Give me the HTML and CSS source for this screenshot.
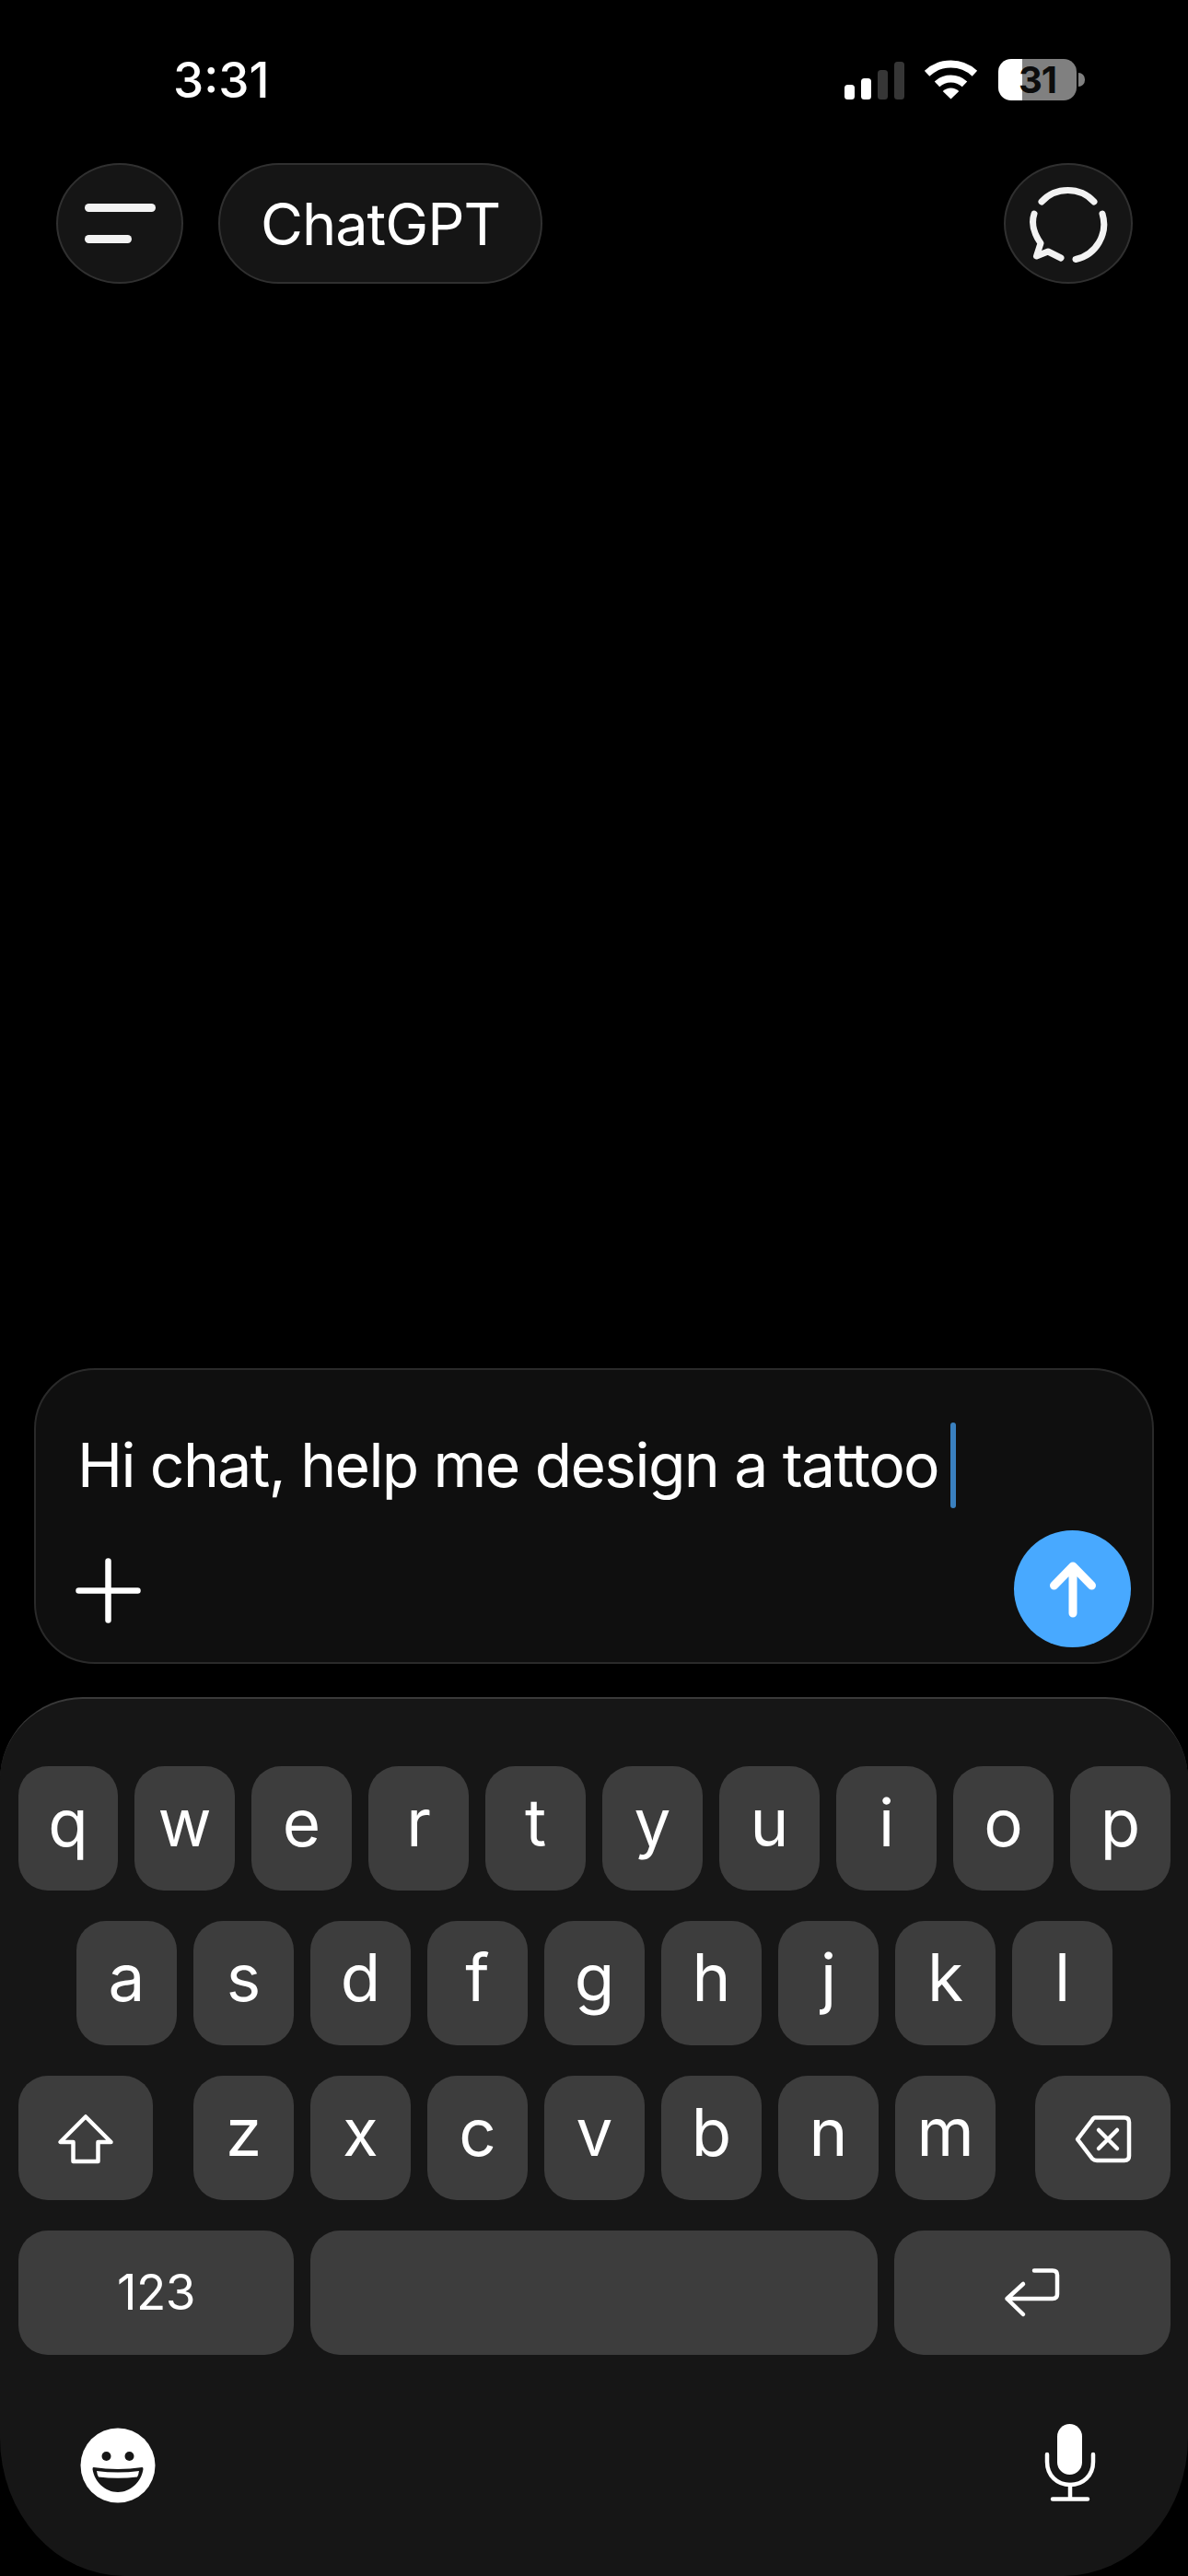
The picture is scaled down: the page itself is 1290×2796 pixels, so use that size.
FILE: index.html
```html
<!DOCTYPE html>
<html lang="en">
<head>
<meta charset="utf-8">
<title>ChatGPT</title>
<link rel="stylesheet" href="styles.css">
</head>
<body>
<div class="phone">
  <div class="status">
    <span class="time">3:31</span>
    <div class="status-icons">
      <svg class="signal" width="65" height="42" viewBox="916 65 65 42">
        <rect x="916" y="91" width="11" height="16" rx="3.5" fill="#fff"/>
        <rect x="934" y="84" width="11" height="23" rx="3.5" fill="#fff"/>
        <rect x="952" y="75" width="11" height="32" rx="3.5" fill="#363636"/>
        <rect x="970" y="66" width="11" height="41" rx="3.5" fill="#363636"/>
      </svg>
      <svg class="wifi" width="58" height="43" viewBox="1004 64.500 58 43">
        <path d="M1006.600 79.200A38 38 0 0 1 1058.400 79.200M1017.500 90.900A22 22 0 0 1 1047.500 90.900" fill="none" stroke="#fff" stroke-width="8"/>
        <path d="M1032.500 107L1023.700 98.500A12.500 12.500 0 0 1 1041.300 98.500Z" fill="#fff"/>
      </svg>
      <div class="battery"><span class="battery-level">31</span><span class="battery-nub"></span></div>
    </div>
  </div>

  <header class="topbar">
    <div class="topbar-left">
      <div class="round-btn menu-btn">
        <svg width="77" height="43" viewBox="0 0 77 43">
          <rect x="0" y="0" width="77" height="9" rx="4.500" fill="#f2f2f2"/>
          <rect x="0" y="34" width="51" height="9" rx="4.500" fill="#f2f2f2"/>
        </svg>
      </div>
      <div class="title-pill">ChatGPT</div>
    </div>
    <div class="round-btn chat-btn">
      <svg width="90" height="90" viewBox="1115 198 90 90" fill="none" stroke="#f2f2f2" stroke-width="7" stroke-linecap="round" stroke-linejoin="round">
        <path d="M1131 219A39 39 0 0 1 1188 219"/>
        <path d="M1197 232A39 39 0 0 1 1168 281.500"/>
        <path d="M1123 232C1119 244 1123 254 1130 264L1125.500 278L1138 273L1152 280"/>
      </svg>
    </div>
  </header>

  <div class="spacer"></div>

  <section class="composer">
    <div class="input-line">
      <span class="input-text">Hi chat, help me design a tattoo</span>
      <span class="caret"></span>
    </div>
    <div class="composer-actions">
      <svg class="plus" width="71" height="71" viewBox="0 0 71 71" stroke="#fff" stroke-width="6.500" stroke-linecap="round">
        <path d="M3.500 35.500H67.500M35.500 3.500V67.500"/>
      </svg>
      <div class="send">
        <svg width="60" height="70" viewBox="1134 1689 60 70" fill="none" stroke="#fff" stroke-width="9" stroke-linecap="round" stroke-linejoin="round">
          <path d="M1164 1750V1699M1143.500 1720L1164 1699L1184.500 1720"/>
        </svg>
      </div>
    </div>
  </section>

  <section class="keyboard">
    <div class="key-row">
      <div class="key key-first">q</div><div class="key">w</div><div class="key">e</div><div class="key">r</div><div class="key">t</div><div class="key">y</div><div class="key">u</div><div class="key">i</div><div class="key">o</div><div class="key">p</div>
    </div>
    <div class="key-row row-center">
      <div class="key">a</div><div class="key">s</div><div class="key">d</div><div class="key">f</div><div class="key">g</div><div class="key">h</div><div class="key">j</div><div class="key">k</div><div class="key">l</div>
    </div>
    <div class="key-row row-plain">
      <div class="key key-mod">
        <svg width="66" height="60" viewBox="60 2291 66 60" fill="none" stroke="#fff" stroke-width="4.500" stroke-linejoin="round">
          <path d="M93 2297.500L65.500 2325H79.500V2346H106.500V2325H120.500Z"/>
        </svg>
      </div>
      <div class="key-group">
        <div class="key">z</div><div class="key">x</div><div class="key">c</div><div class="key">v</div><div class="key">b</div><div class="key">n</div><div class="key">m</div>
      </div>
      <div class="key key-mod key-del">
        <svg width="74" height="60" viewBox="1160 2291 74 60" fill="none" stroke="#fff" stroke-width="4.500" stroke-linecap="round" stroke-linejoin="round">
          <path d="M1188 2298.500H1220Q1225 2298.500 1225 2303.500V2340Q1225 2345 1220 2345H1190Q1187 2345 1185 2343L1169 2322L1185 2301Q1186.500 2298.500 1188 2298.500Z"/>
          <path d="M1192 2312L1212 2332M1212 2312L1192 2332"/>
        </svg>
      </div>
    </div>
    <div class="key-row">
      <div class="key key-num">123</div>
      <div class="key key-space"></div>
      <div class="key key-return">
        <svg width="70" height="60" viewBox="1087 2458 70 60" fill="none" stroke="#fff" stroke-width="4.500" stroke-linecap="round" stroke-linejoin="round">
          <path d="M1124 2463.500H1144Q1149 2463.500 1149 2468.500V2489Q1149 2494 1144 2494H1094.500M1112 2478L1094.500 2494L1112 2511"/>
        </svg>
      </div>
    </div>
    <div class="key-footer">
      <svg width="90" height="90" viewBox="82.500 2630 90 90">
        <circle cx="127.500" cy="2676" r="40.500" fill="#fff"/>
        <circle cx="115" cy="2666" r="5" fill="#161616"/>
        <circle cx="140" cy="2666" r="5" fill="#161616"/>
        <path d="M101 2678Q127.500 2682 154 2678Q155 2678 155 2680C153 2694 141 2705 127.500 2705C114 2705 102 2694 100 2680Q100 2678 101 2678Z" fill="#161616"/>
        <path d="M104.500 2682Q127.500 2685 150.500 2682Q150 2686 148.500 2688.500Q127.500 2691 106.500 2688.500Q105 2686 104.500 2682Z" fill="#fff"/>
      </svg>
      <svg width="60" height="90" viewBox="1132 2630 60 90" fill="none" stroke="#fff" stroke-width="4.500" stroke-linecap="round">
        <rect x="1148" y="2631" width="27" height="55" rx="13.500" fill="#fff" stroke="none"/>
        <path d="M1137 2664V2672C1137 2687 1148 2697 1162 2697C1176 2697 1187 2687 1187 2672V2664"/>
        <path d="M1162 2697V2712.500M1143 2712.500H1181"/>
      </svg>
    </div>
  </section>
</div>
</body>
</html>
```
FILE: styles.css
```css
* {
  box-sizing: border-box;
}

html,
body {
  margin: 0;
  padding: 0;
  background: #000;
}

.phone {
  width: 1290px;
  height: 2796px;
  display: flex;
  flex-direction: column;
  overflow: hidden;
  background: #000;
  color: #fff;
  font-family: Inter, "Liberation Sans", sans-serif;
}

/* status bar */
.status {
  height: 177px;
  display: flex;
  justify-content: space-between;
  align-items: flex-start;
  padding: 56px 121px 0 188px;
}

.time {
  font-size: 53px;
  line-height: 63px;
  font-weight: 500;
}

.status-icons {
  display: flex;
  align-items: flex-start;
  gap: 22px;
  padding-top: 8px;
}

.signal {
  margin-top: 2px;
}

.wifi {
  margin-top: 0.5px;
}

.battery {
  position: relative;
  width: 85px;
  height: 45px;
  border-radius: 14px;
  background: linear-gradient(90deg, #fff 0 26px, #808080 26px);
  color: #0c0c0c;
  font-size: 40px;
  font-weight: 700;
  line-height: 45px;
  letter-spacing: -1px;
  text-align: center;
}

.battery-level {
  display: block;
}

.battery-nub {
  position: absolute;
  left: 87px;
  top: 15px;
  width: 7px;
  height: 15px;
  border-radius: 0 8px 8px 0;
  background: #808080;
}

/* top bar */
.topbar {
  height: 131px;
  display: flex;
  justify-content: space-between;
  padding: 0 60px 0 61px;
}

.topbar-left {
  display: flex;
  gap: 38px;
}

.round-btn {
  height: 131px;
  display: flex;
  align-items: center;
  justify-content: center;
  border: 2px solid #303030;
  border-radius: 50%;
  background: #151515;
}

.menu-btn {
  width: 138px;
}

.chat-btn {
  width: 140px;
}

.title-pill {
  width: 352px;
  height: 131px;
  display: flex;
  align-items: center;
  justify-content: center;
  border: 2px solid #303030;
  border-radius: 66px;
  background: #151515;
  font-size: 63px;
  font-weight: 400;
  letter-spacing: -1px;
}

.spacer {
  flex: 1;
}

/* composer */
.composer {
  height: 321px;
  margin: 0 37px 36px;
  padding: 57px 23px 16px 43px;
  display: flex;
  flex-direction: column;
  border: 2px solid #2a2a2a;
  border-radius: 66px;
  background: #0f0f0f;
}

.input-line {
  height: 93px;
  display: flex;
  align-items: center;
  padding-left: 2px;
  gap: 13px;
}

.input-text {
  font-size: 66px;
  line-height: 93px;
  letter-spacing: -1.6px;
}

.caret {
  width: 6px;
  height: 93px;
  border-radius: 3px;
  background: #3a80bf;
}

.composer-actions {
  margin-top: 24px;
  display: flex;
  justify-content: space-between;
  align-items: center;
}

.plus {
  margin-top: 3px;
}

.send {
  width: 127px;
  height: 127px;
  display: flex;
  align-items: center;
  justify-content: center;
  border-radius: 50%;
  background: #48a9ff;
}

/* keyboard */
.keyboard {
  height: 954px;
  padding: 73px 19px 0 20px;
  display: flex;
  flex-direction: column;
  gap: 33px;
  border-top: 2px solid #3a3a3a;
  border-radius: 90px 90px 135px 135px / 90px 90px 150px 150px;
  background: #161616;
}

.key-row,
.key-group {
  display: flex;
  gap: 18px;
}

.row-center {
  justify-content: center;
}

.row-plain {
  gap: 0;
}

.key-group {
  margin: 0 43px 0 44px;
}

.key {
  width: 109px;
  height: 135px;
  display: flex;
  align-items: center;
  justify-content: center;
  padding-bottom: 13px;
  border-radius: 32px;
  background: #3d3d3d;
  font-size: 71px;
  line-height: 1;
  font-weight: 400;
}

.key-first {
  width: 108px;
}

.key-mod {
  width: 146px;
  padding-bottom: 0;
}

.key-del {
  width: 147px;
}

.key-num {
  width: 299px;
  padding-bottom: 0;
  font-size: 53px;
  font-weight: 400;
  letter-spacing: -0.5px;
}

.key-space {
  flex: 1;
}

.key-return {
  width: 300px;
  padding-bottom: 0;
}

.key-footer {
  display: flex;
  justify-content: space-between;
  align-items: flex-start;
  margin-top: 41px;
  padding: 0 79px 0 63px;
}
```
